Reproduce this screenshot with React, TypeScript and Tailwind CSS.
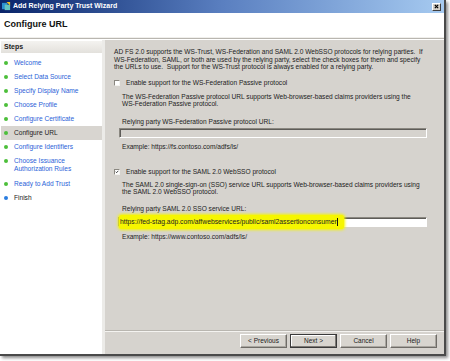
import React from "react";

const steps: { label: string[]; state: "done" | "current" | "todo" }[] = [
	{ label: ["Welcome"], state: "done" },
	{ label: ["Select Data Source"], state: "done" },
	{ label: ["Specify Display Name"], state: "done" },
	{ label: ["Choose Profile"], state: "done" },
	{ label: ["Configure Certificate"], state: "done" },
	{ label: ["Configure URL"], state: "current" },
	{ label: ["Configure Identifiers"], state: "done" },
	{ label: ["Choose Issuance", "Authorization Rules"], state: "done" },
	{ label: ["Ready to Add Trust"], state: "done" },
	{ label: ["Finish"], state: "todo" },
];

function Checkbox({ checked }: { checked?: boolean }) {
	return (
		<span className="relative block h-[6px] w-[6px] flex-shrink-0 border-t border-l border-[#8a8780] border-r border-b border-r-[#f4f3f0] border-b-[#f4f3f0] bg-white">
			{checked && (
				<svg viewBox="0 0 6 6" className="absolute inset-0 h-full w-full">
					<path d="M1 2.6 L2.4 4 L5 1.2" fill="none" stroke="#111" strokeWidth="1.2" />
				</svg>
			)}
		</span>
	);
}

function Button({ label, primary }: { label: string; primary?: boolean }) {
	return (
		<div
			className={`flex h-[14px] w-[47px] items-center justify-center border bg-[#d8d5cf] text-[6.5px] text-[#222] ${
				primary
					? "border-[#3a3a3a] shadow-[inset_-1px_-1px_0_#7d7a75,inset_1px_1px_0_#fff]"
					: "border-t-white border-l-white border-r-[#6f6c67] border-b-[#6f6c67] shadow-[inset_-1px_-1px_0_#a9a6a0]"
			}`}
		>
			{label}
		</div>
	);
}

export default function App() {
	return (
		<div
			className="h-[361px] w-[450px] overflow-hidden bg-white"
			style={{ fontFamily: '"Liberation Sans", Arial, sans-serif' }}
		>
			<div className="flex h-[356px] w-[446px] flex-col border-r-2 border-b-2 border-[#4a4a4a] shadow-[2px_2px_3px_rgba(0,0,0,0.45)]">
				{/* title bar */}
				<div className="flex h-[13px] items-center bg-gradient-to-r from-[#0a246a] via-[#5a7fc0] to-[#a6caf0] pl-[2px] pr-[3px]">
					<svg viewBox="0 0 10 10" className="h-[9px] w-[9px]">
						<rect x="0" y="1" width="6" height="7" fill="#2a8fd0" />
						<rect x="3" y="3" width="6" height="6" fill="#63c3c0" />
						<path d="M5 0 L9 0 L9 4 Z" fill="#f0c020" />
					</svg>
					<span className="ml-[2px] text-[7px] font-bold text-white">Add Relying Party Trust Wizard</span>
					<div className="ml-auto flex h-[8px] w-[9px] items-center justify-center border border-t-white border-l-white border-r-[#404040] border-b-[#404040] bg-[#d4d0c8]">
						<svg viewBox="0 0 6 6" className="h-[5px] w-[5px]">
							<path d="M1 1 L5 5 M5 1 L1 5" stroke="#000" strokeWidth="1.4" />
						</svg>
					</div>
				</div>

				{/* header */}
				<div className="flex h-[24px] items-center bg-white pl-[4px]">
					<span className="text-[9px] font-bold text-[#111]">Configure URL</span>
				</div>
				<div className="h-[1px] bg-[#f0efec]" />
				<div className="h-[1px] bg-[#b9b6b0]" />
				<div className="h-[1px] bg-white" />

				{/* body */}
				<div className="flex min-h-0 flex-1">
					{/* steps panel */}
					<div className="flex w-[105px] flex-col border-r-[3px] border-[#ecebe8] bg-white pl-[1px] pt-[1px]">
						<div className="flex h-[12px] items-center bg-gradient-to-b from-[#f4f3f0] to-[#e3e1dc] pl-[3px] text-[7px] font-bold text-[#222]">
							Steps
						</div>
						<div className="mt-[3px] flex flex-col">
							{steps.map((s) => (
								<div
									key={s.label[0]}
									className={`flex items-start pl-[3px] ${s.state === "current" ? "bg-[#d8d5d0]" : ""}`}
								>
									<span
										className={`mt-[5px] h-[4px] w-[4px] flex-shrink-0 rounded-full ${
											s.state === "todo" ? "bg-[#2a7de0]" : "bg-[#4cbf3a]"
										}`}
									/>
									<div className="ml-[6px] flex flex-col">
										{s.label.map((l, i) => (
											<span
												key={l}
												className={`whitespace-nowrap text-[6.6px] ${
													i > 0 ? "-mt-[7px] leading-[16px]" : "leading-[14px]"
												} ${s.state === "done" ? "text-[#2b63d8]" : "text-[#222]"}`}
											>
												{l}
											</span>
										))}
									</div>
								</div>
							))}
						</div>
					</div>

					{/* content */}
					<div className="flex flex-1 flex-col bg-[#d6d3ce]">
						<div className="flex flex-1 flex-col pl-[9px] text-[6.6px] leading-[7.5px] text-[#222]">
							<div className="mt-[8px] whitespace-nowrap">
								<div>AD FS 2.0 supports the WS-Trust, WS-Federation and SAML 2.0 WebSSO protocols for relying parties.&nbsp; If</div>
								<div>WS-Federation, SAML, or both are used by the relying party, select the check boxes for them and specify</div>
								<div>the URLs to use.&nbsp; Support for the WS-Trust protocol is always enabled for a relying party.</div>
							</div>

							<div className="mt-[8px] flex h-[8px] items-center">
								<Checkbox />
								<span className="ml-[6px] whitespace-nowrap">Enable support for the WS-Federation Passive protocol</span>
							</div>
							<div className="ml-[8px] mt-[6px] whitespace-nowrap">
								<div>The WS-Federation Passive protocol URL supports Web-browser-based claims providers using the</div>
								<div>WS-Federation Passive protocol.</div>
							</div>
							<div className="ml-[8px] mt-[10px] whitespace-nowrap">Relying party WS-Federation Passive protocol URL:</div>
							<div className="ml-[5px] mt-[3px] h-[10px] w-[308px] border border-t-[#8a8780] border-l-[#8a8780] border-r-white border-b-white bg-[#d6d3ce] shadow-[inset_1px_1px_0_#5e5c58]" />
							<div className="ml-[8px] mt-[5px] whitespace-nowrap">Example: https://fs.contoso.com/adfs/ls/</div>

							<div className="mt-[17px] flex h-[8px] items-center">
								<Checkbox checked />
								<span className="ml-[6px] whitespace-nowrap">Enable support for the SAML 2.0 WebSSO protocol</span>
							</div>
							<div className="ml-[8px] mt-[5px] whitespace-nowrap">
								<div>The SAML 2.0 single-sign-on (SSO) service URL supports Web-browser-based claims providers using</div>
								<div>the SAML 2.0 WebSSO protocol.</div>
							</div>
							<div className="ml-[8px] mt-[9px] whitespace-nowrap">Relying party SAML 2.0 SSO service URL:</div>
							<div className="ml-[4px] mt-[5px] flex h-[10px] w-[309px] items-center border border-t-[#8a8780] border-l-[#8a8780] border-r-white border-b-white bg-white shadow-[inset_1px_1px_0_#5e5c58]">
								<span className="-my-[3px] flex h-[14px] items-center whitespace-nowrap rounded-[3px] bg-[#f6f600] pl-[1px] pr-[6px] text-[6.8px] shadow-[0_0_3px_1px_#f6f600]">
									https://fed-stag.adp.com/affwebservices/public/saml2assertionconsumer
									<span className="ml-[0.5px] h-[8px] w-[1px] bg-[#111]" />
								</span>
							</div>
							<div className="ml-[8px] mt-[6px] whitespace-nowrap">Example: https://www.contoso.com/adfs/ls/</div>
						</div>

						{/* footer */}
						<div className="h-[1px] bg-[#b9b6b0]" />
						<div className="h-[1px] bg-[#f4f3f0]" />
						<div className="flex h-[22px] items-start justify-end gap-[3px] pr-[7px] pt-[2px]">
							<Button label="< Previous" />
							<Button label="Next >" primary />
							<Button label="Cancel" />
							<Button label="Help" />
						</div>
					</div>
				</div>
			</div>
		</div>
	);
}
